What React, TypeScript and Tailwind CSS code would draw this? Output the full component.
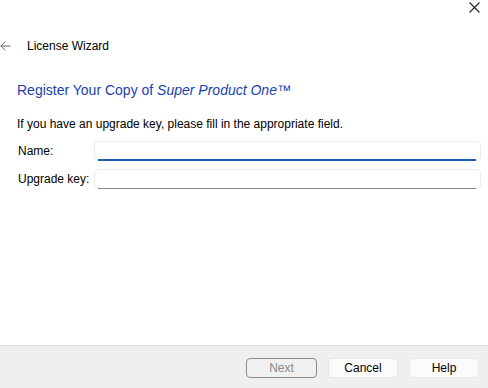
import React from "react";

export default function App() {
  const font = { fontFamily: '"Liberation Sans", Arial, sans-serif' };
  return (
    <div className="w-[488px] h-[388px] flex flex-col bg-white text-black text-[12px]" style={font}>
      <div className="h-[16px] flex justify-end items-start pr-[8px] pt-[2px]">
        <svg width="11" height="11" viewBox="0 0 11 11">
          <path d="M0.5 0.5 L10.5 10.5 M10.5 0.5 L0.5 10.5" stroke="#222" strokeWidth="1.1" fill="none" />
        </svg>
      </div>
      <div className="h-[30px] mt-[15px] flex items-center">
        <svg width="11" height="10" viewBox="0 0 11 10">
          <path d="M10.5 5 L0.8 5 M5.2 0.6 L0.8 5 L5.2 9.4" stroke="#666" strokeWidth="1" fill="none" />
        </svg>
        <span className="ml-[16px]">License Wizard</span>
      </div>
      <div className="flex-1 px-[17px]">
        <div className="mt-[18px] text-[14px] text-[#1a3fae] leading-[22px]">
          Register Your Copy of <i>Super Product One</i>™
        </div>
        <div className="mt-[15px] leading-[16px]">If you have an upgrade key, please fill in the appropriate field.</div>
        <div className="mt-[9px] flex flex-col gap-[8px]">
          <div className="flex items-center">
            <span className="w-[77px] pl-[1px]">Name:</span>
            <div className="flex-1 h-[20px] mr-[-10px] rounded-[4px] border border-[#ececec] relative">
              <div className="absolute left-[3px] right-[4px] bottom-[-1px] h-[2px] bg-[#1a5fb4]" />
            </div>
          </div>
          <div className="flex items-center">
            <span className="w-[77px] pl-[1px]">Upgrade key:</span>
            <div className="flex-1 h-[20px] mr-[-10px] rounded-[4px] border border-[#ececec] relative">
              <div className="absolute left-[3px] right-[4px] bottom-[-1px] h-[1px] bg-[#8a8a8a]" />
            </div>
          </div>
        </div>
      </div>
      <div className="h-[43px] bg-[#efefef] border-t border-[#dcdcdc] flex items-start justify-end pt-[12px] pr-[9px] gap-[11px]">
        <button className="w-[71px] h-[20px] rounded-[4px] border border-[#8a8a8a] bg-[#f0f0f0] text-[#8a8a8a]">Next</button>
        <button className="w-[70px] h-[20px] rounded-[4px] border border-[#e6e6e6] bg-[#fbfbfb] text-black">Cancel</button>
        <button className="w-[70px] h-[20px] rounded-[4px] border border-[#e6e6e6] bg-[#fbfbfb] text-black">Help</button>
      </div>
    </div>
  );
}
